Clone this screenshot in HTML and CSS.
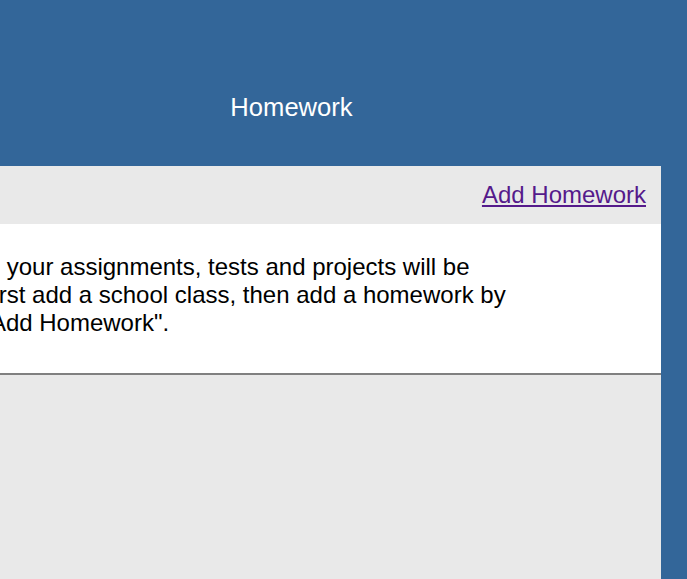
FILE: index.html
```html
<!DOCTYPE html>
<html lang="en">
<head>
<meta charset="utf-8">
<title>Homework</title>
<link rel="stylesheet" href="styles.css">
</head>
<body>
<div class="app">
  <header class="header">
    <h1 class="title">Homework</h1>
  </header>
  <main class="panel">
    <div class="toolbar">
      <a class="add-link" href="#">Add Homework</a>
    </div>
    <section class="content">
      <p class="empty-text">Over time your assignments, tests and projects will be shown. First add a school class, then add a homework by clicking "Add Homework".</p>
    </section>
  </main>
</div>
</body>
</html>
```

FILE: styles.css
```css
html, body {
  margin: 0;
  padding: 0;
}

body {
  background: #336699;
  font-family: "Liberation Sans", Arial, sans-serif;
  overflow: hidden;
  height: 579px;
}

.app {
  margin-left: -130px;
  width: 843px;
}

.header {
  height: 166px;
  box-sizing: border-box;
  padding-top: 92px;
  text-align: center;
}

.title {
  margin: 0;
  color: #ffffff;
  font-size: 25.6px;
  font-weight: normal;
  line-height: 30px;
}

.panel {
  margin-right: 52px;
  background: #e9e9e9;
  height: 413px;
}

.toolbar {
  display: flex;
  justify-content: flex-end;
  padding: 15px 15px;
  font-size: 24px;
  line-height: 28px;
}

.add-link {
  color: #551a8b;
  text-decoration: underline;
}

.content {
  background: #ffffff;
  padding: 29px 0 36px 26px;
  border-bottom: 2px solid #808080;
  font-size: 24px;
  line-height: 28px;
  color: #000000;
}

.empty-text {
  margin: 0;
  max-width: 630px;
}
```
